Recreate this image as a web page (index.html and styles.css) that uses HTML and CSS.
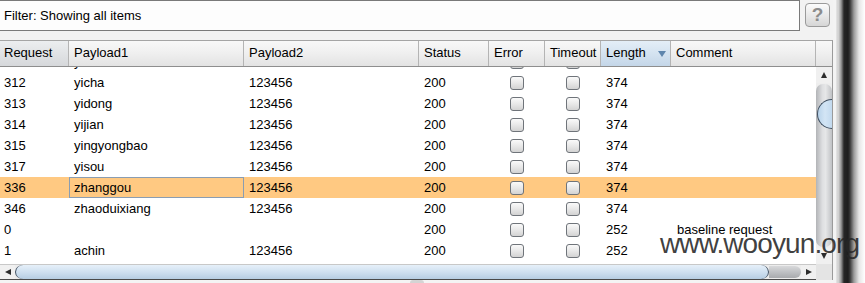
FILE: index.html
```html
<!DOCTYPE html>
<html lang="en">
<head>
    <meta charset="UTF-8">
    <title>Intruder Results</title>
    <link rel="stylesheet" href="styles.css">
</head>
<body>

<div class="window">
    <div class="main">
        <!-- Filter bar -->
        <div class="filter-row">
            <div class="filter-field">Filter: Showing all items</div>
            <button class="help-btn">?</button>
        </div>

        <!-- Results table -->
        <div class="results">
            <div class="thead">
                <div class="th th-hover">Request</div>
                <div class="th">Payload1</div>
                <div class="th">Payload2</div>
                <div class="th">Status</div>
                <div class="th">Error</div>
                <div class="th">Timeout</div>
                <div class="th th-sorted">Length<span class="sort-arrow"></span></div>
                <div class="th">Comment</div>
                <div class="th th-corner"></div>
            </div>

            <div class="body-wrap">
                <div class="tbody">
                    <!-- row scrolled mostly out of view -->
                    <div class="tr first">
                        <div class="td"></div><div class="td">y</div><div class="td"></div><div class="td"></div>
                        <div class="td check"><span class="box"></span></div><div class="td check"><span class="box"></span></div>
                        <div class="td"></div><div class="td"></div>
                    </div>
                    <div class="tr">
                        <div class="td">312</div><div class="td">yicha</div><div class="td">123456</div><div class="td">200</div>
                        <div class="td check"><span class="box"></span></div><div class="td check"><span class="box"></span></div>
                        <div class="td">374</div><div class="td"></div>
                    </div>
                    <div class="tr">
                        <div class="td">313</div><div class="td">yidong</div><div class="td">123456</div><div class="td">200</div>
                        <div class="td check"><span class="box"></span></div><div class="td check"><span class="box"></span></div>
                        <div class="td">374</div><div class="td"></div>
                    </div>
                    <div class="tr">
                        <div class="td">314</div><div class="td">yijian</div><div class="td">123456</div><div class="td">200</div>
                        <div class="td check"><span class="box"></span></div><div class="td check"><span class="box"></span></div>
                        <div class="td">374</div><div class="td"></div>
                    </div>
                    <div class="tr">
                        <div class="td">315</div><div class="td">yingyongbao</div><div class="td">123456</div><div class="td">200</div>
                        <div class="td check"><span class="box"></span></div><div class="td check"><span class="box"></span></div>
                        <div class="td">374</div><div class="td"></div>
                    </div>
                    <div class="tr">
                        <div class="td">317</div><div class="td">yisou</div><div class="td">123456</div><div class="td">200</div>
                        <div class="td check"><span class="box"></span></div><div class="td check"><span class="box"></span></div>
                        <div class="td">374</div><div class="td"></div>
                    </div>
                    <div class="tr selected">
                        <div class="td">336</div><div class="td focused">zhanggou</div><div class="td">123456</div><div class="td">200</div>
                        <div class="td check"><span class="box"></span></div><div class="td check"><span class="box"></span></div>
                        <div class="td">374</div><div class="td"></div>
                    </div>
                    <div class="tr">
                        <div class="td">346</div><div class="td">zhaoduixiang</div><div class="td">123456</div><div class="td">200</div>
                        <div class="td check"><span class="box"></span></div><div class="td check"><span class="box"></span></div>
                        <div class="td">374</div><div class="td"></div>
                    </div>
                    <div class="tr">
                        <div class="td">0</div><div class="td"></div><div class="td"></div><div class="td">200</div>
                        <div class="td check"><span class="box"></span></div><div class="td check"><span class="box"></span></div>
                        <div class="td">252</div><div class="td">baseline request</div>
                    </div>
                    <div class="tr">
                        <div class="td">1</div><div class="td">achin</div><div class="td">123456</div><div class="td">200</div>
                        <div class="td check"><span class="box"></span></div><div class="td check"><span class="box"></span></div>
                        <div class="td">252</div><div class="td"></div>
                    </div>
                    <!-- next row, only the checkbox tops show -->
                    <div class="tr">
                        <div class="td"></div><div class="td"></div><div class="td"></div><div class="td"></div>
                        <div class="td check"><span class="box"></span></div><div class="td check"><span class="box"></span></div>
                        <div class="td"></div><div class="td"></div>
                    </div>
                </div>

                <!-- vertical scrollbar -->
                <div class="vscroll">
                    <div class="arrow-btn"><span class="tri-up"></span></div>
                    <div class="vtrack">
                        <div class="vthumb"></div>
                    </div>
                    <div class="arrow-btn"><span class="tri-down"></span></div>
                </div>
            </div>

            <!-- horizontal scrollbar -->
            <div class="hscroll-row">
                <div class="hscroll">
                    <div class="arrow-btn h"><span class="tri-left"></span></div>
                    <div class="hthumb"></div>
                    <div class="htrack-end"></div>
                    <div class="arrow-btn h"><span class="tri-right"></span></div>
                </div>
                <div class="scroll-corner"></div>
            </div>
        </div>

        <div class="bottom-strip"><span class="grip"></span></div>
    </div>
    <div class="frame-edge"></div>
</div>

<div class="watermark">www.wooyun.org</div>

</body>
</html>
```

FILE: styles.css
```css
body {
    font-family: "Liberation Sans", Arial, sans-serif;
    font-size: 13px;
    color: #000;
    background-color: #f2f2f2;
    margin: 0;
    padding: 0;
    width: 865px;
    height: 283px;
    overflow: hidden;
    position: relative;
}

.window {
    display: flex;
    height: 283px;
}

.main {
    width: 833px;
    display: flex;
    flex-direction: column;
}

/* filter bar */
.filter-row {
    height: 40px;
    display: flex;
    align-items: flex-start;
    box-sizing: border-box;
}

.filter-field {
    width: 800px;
    height: 31px;
    box-sizing: border-box;
    border: 1px solid #7a7a7a;
    border-left: none;
    background-color: #fdfdfd;
    padding-left: 4px;
    line-height: 29px;
}

.help-btn {
    margin-left: 5px;
    margin-top: 3px;
    width: 25px;
    height: 24px;
    padding: 0;
    border: 1px solid #9a9a9a;
    border-radius: 4px;
    background: linear-gradient(#fbfbfb, #e9e9e9 50%, #d6d6d6);
    color: #8c8c8c;
    font-family: "Liberation Sans", Arial, sans-serif;
    font-size: 19px;
    font-weight: bold;
    line-height: 20px;
}

/* table */
.results {
    border-top: 1px solid #a5a5a5;
    border-right: 1px solid #9a9a9a;
    display: flex;
    flex-direction: column;
    background-color: #fff;
}

.thead {
    display: grid;
    grid-template-columns: 69px 175px 175px 70px 56px 56px 70px 145px 16px;
    height: 25px;
    border-bottom: 1px solid #8e8e8e;
    background: linear-gradient(#f8f8f8, #f0f0f0 45%, #e3e3e3);
    position: relative;
    z-index: 1;
}

.th {
    box-sizing: border-box;
    border-right: 1px solid #b4b4b4;
    padding-left: 5px;
    line-height: 24px;
    white-space: nowrap;
    overflow: hidden;
    position: relative;
}

.th:first-child {
    padding-left: 4px;
}

.th-hover {
    background: linear-gradient(#eceef0, #e2e4e6 45%, #d6d8db);
}

.th-sorted {
    background: linear-gradient(#e4eef7, #d6e4f1 45%, #c4d6e8);
}

.th-corner {
    border-right: none;
}

.sort-arrow {
    position: absolute;
    right: 4px;
    top: 10px;
    border-left: 4px solid transparent;
    border-right: 4px solid transparent;
    border-top: 6px solid #5f86ad;
}

.body-wrap {
    display: flex;
    height: 197px;
}

.tbody {
    width: 816px;
    overflow: hidden;
}

.tr {
    display: grid;
    grid-template-columns: 69px 175px 175px 70px 56px 56px 70px 145px;
    height: 21px;
    line-height: 21px;
}

.tr.first {
    margin-top: -16px;
}

.tr.selected {
    background-color: #ffc982;
}

.td {
    box-sizing: border-box;
    padding-left: 5px;
    white-space: nowrap;
    overflow: hidden;
}

.td:first-child {
    padding-left: 4px;
}

.td:last-child {
    padding-left: 6px;
}

.td.focused {
    box-shadow: inset 0 0 0 1px #8a9db2;
}

.td.check {
    padding-left: 0;
    display: flex;
    align-items: center;
    justify-content: center;
}

.box {
    width: 14px;
    height: 14px;
    box-sizing: border-box;
    border: 1px solid #6f747a;
    border-radius: 3px;
    background: linear-gradient(#fafafa, #e8e8e8 50%, #d3d3d3);
}

/* scrollbars */
.vscroll {
    width: 16px;
    display: flex;
    flex-direction: column;
    background-color: #eeeeee;
}

.arrow-btn {
    height: 16px;
    display: flex;
    align-items: center;
    justify-content: center;
    background-color: #f0f0f0;
}

.arrow-btn.h {
    width: 15px;
    height: auto;
}

.tri-up {
    border-left: 3px solid transparent;
    border-right: 3px solid transparent;
    border-bottom: 6px solid #2c2c2c;
}

.tri-down {
    border-left: 3px solid transparent;
    border-right: 3px solid transparent;
    border-top: 6px solid #2c2c2c;
}

.tri-left {
    border-top: 3px solid transparent;
    border-bottom: 3px solid transparent;
    border-right: 6px solid #2c2c2c;
}

.tri-right {
    border-top: 3px solid transparent;
    border-bottom: 3px solid transparent;
    border-left: 6px solid #2c2c2c;
}

.vtrack {
    flex: 1;
    margin: 1px 0;
    border-radius: 7px;
    background: linear-gradient(to right, #b2b4b7, #dedfe1 40%, #e6e7e8 60%, #c0c2c5);
    display: flex;
    flex-direction: column;
    align-items: flex-end;
}

.vthumb {
    margin-top: 15px;
    width: 15px;
    height: 30px;
    box-sizing: border-box;
    border: 1px solid #3f4f60;
    border-right: none;
    border-radius: 15px 0 0 15px;
    background: linear-gradient(to right, #b9d3ea, #d3e5f5 50%, #c2d9ee);
}

.hscroll-row {
    display: flex;
    height: 16px;
}

.hscroll {
    width: 816px;
    display: flex;
    box-sizing: border-box;
    border-top: 1px solid #c8c8c8;
    border-bottom: 1px solid #4a4a4a;
    background-color: #ececec;
}

.hthumb {
    width: 754px;
    box-sizing: border-box;
    border-left: 1px solid #3f4f60;
    border-right: 1px solid #3f4f60;
    border-radius: 14px / 12px;
    background: linear-gradient(#e6f0f9, #cfe0f0 50%, #b6cde2);
}

.htrack-end {
    flex: 1;
    margin: 1px 0;
    border-radius: 0 7px 7px 0;
    background: linear-gradient(#d8d9db, #bfc1c4 50%, #a9abae);
}

.scroll-corner {
    width: 16px;
    background-color: #e4e4e4;
}

.bottom-strip {
    flex: 1;
    background-color: #f4f4f4;
    position: relative;
}

.grip {
    position: absolute;
    left: 410px;
    bottom: 0;
    width: 14px;
    height: 3px;
    border-radius: 3px 3px 0 0;
    background-color: #d4d4d4;
}

/* outer frame shadow */
.frame-edge {
    flex: 1;
    background: linear-gradient(to right, #f3f3f3 0, #f3f3f3 3px, #cfcfcf 4px, #dcdcdc 5px, #9a9a9a 8px, #262626 11px, #1e1e1e 15px, #3a3a3a 17px, #9c9c9c 21px, #e6e6e6 26px, #ffffff 32px);
}

.watermark {
    position: absolute;
    left: 660px;
    top: 234px;
    font-family: "Liberation Sans", Arial, sans-serif;
    font-size: 28px;
    letter-spacing: -0.9px;
    line-height: 20px;
    color: rgba(38, 38, 38, 0.88);
    white-space: nowrap;
}
```
